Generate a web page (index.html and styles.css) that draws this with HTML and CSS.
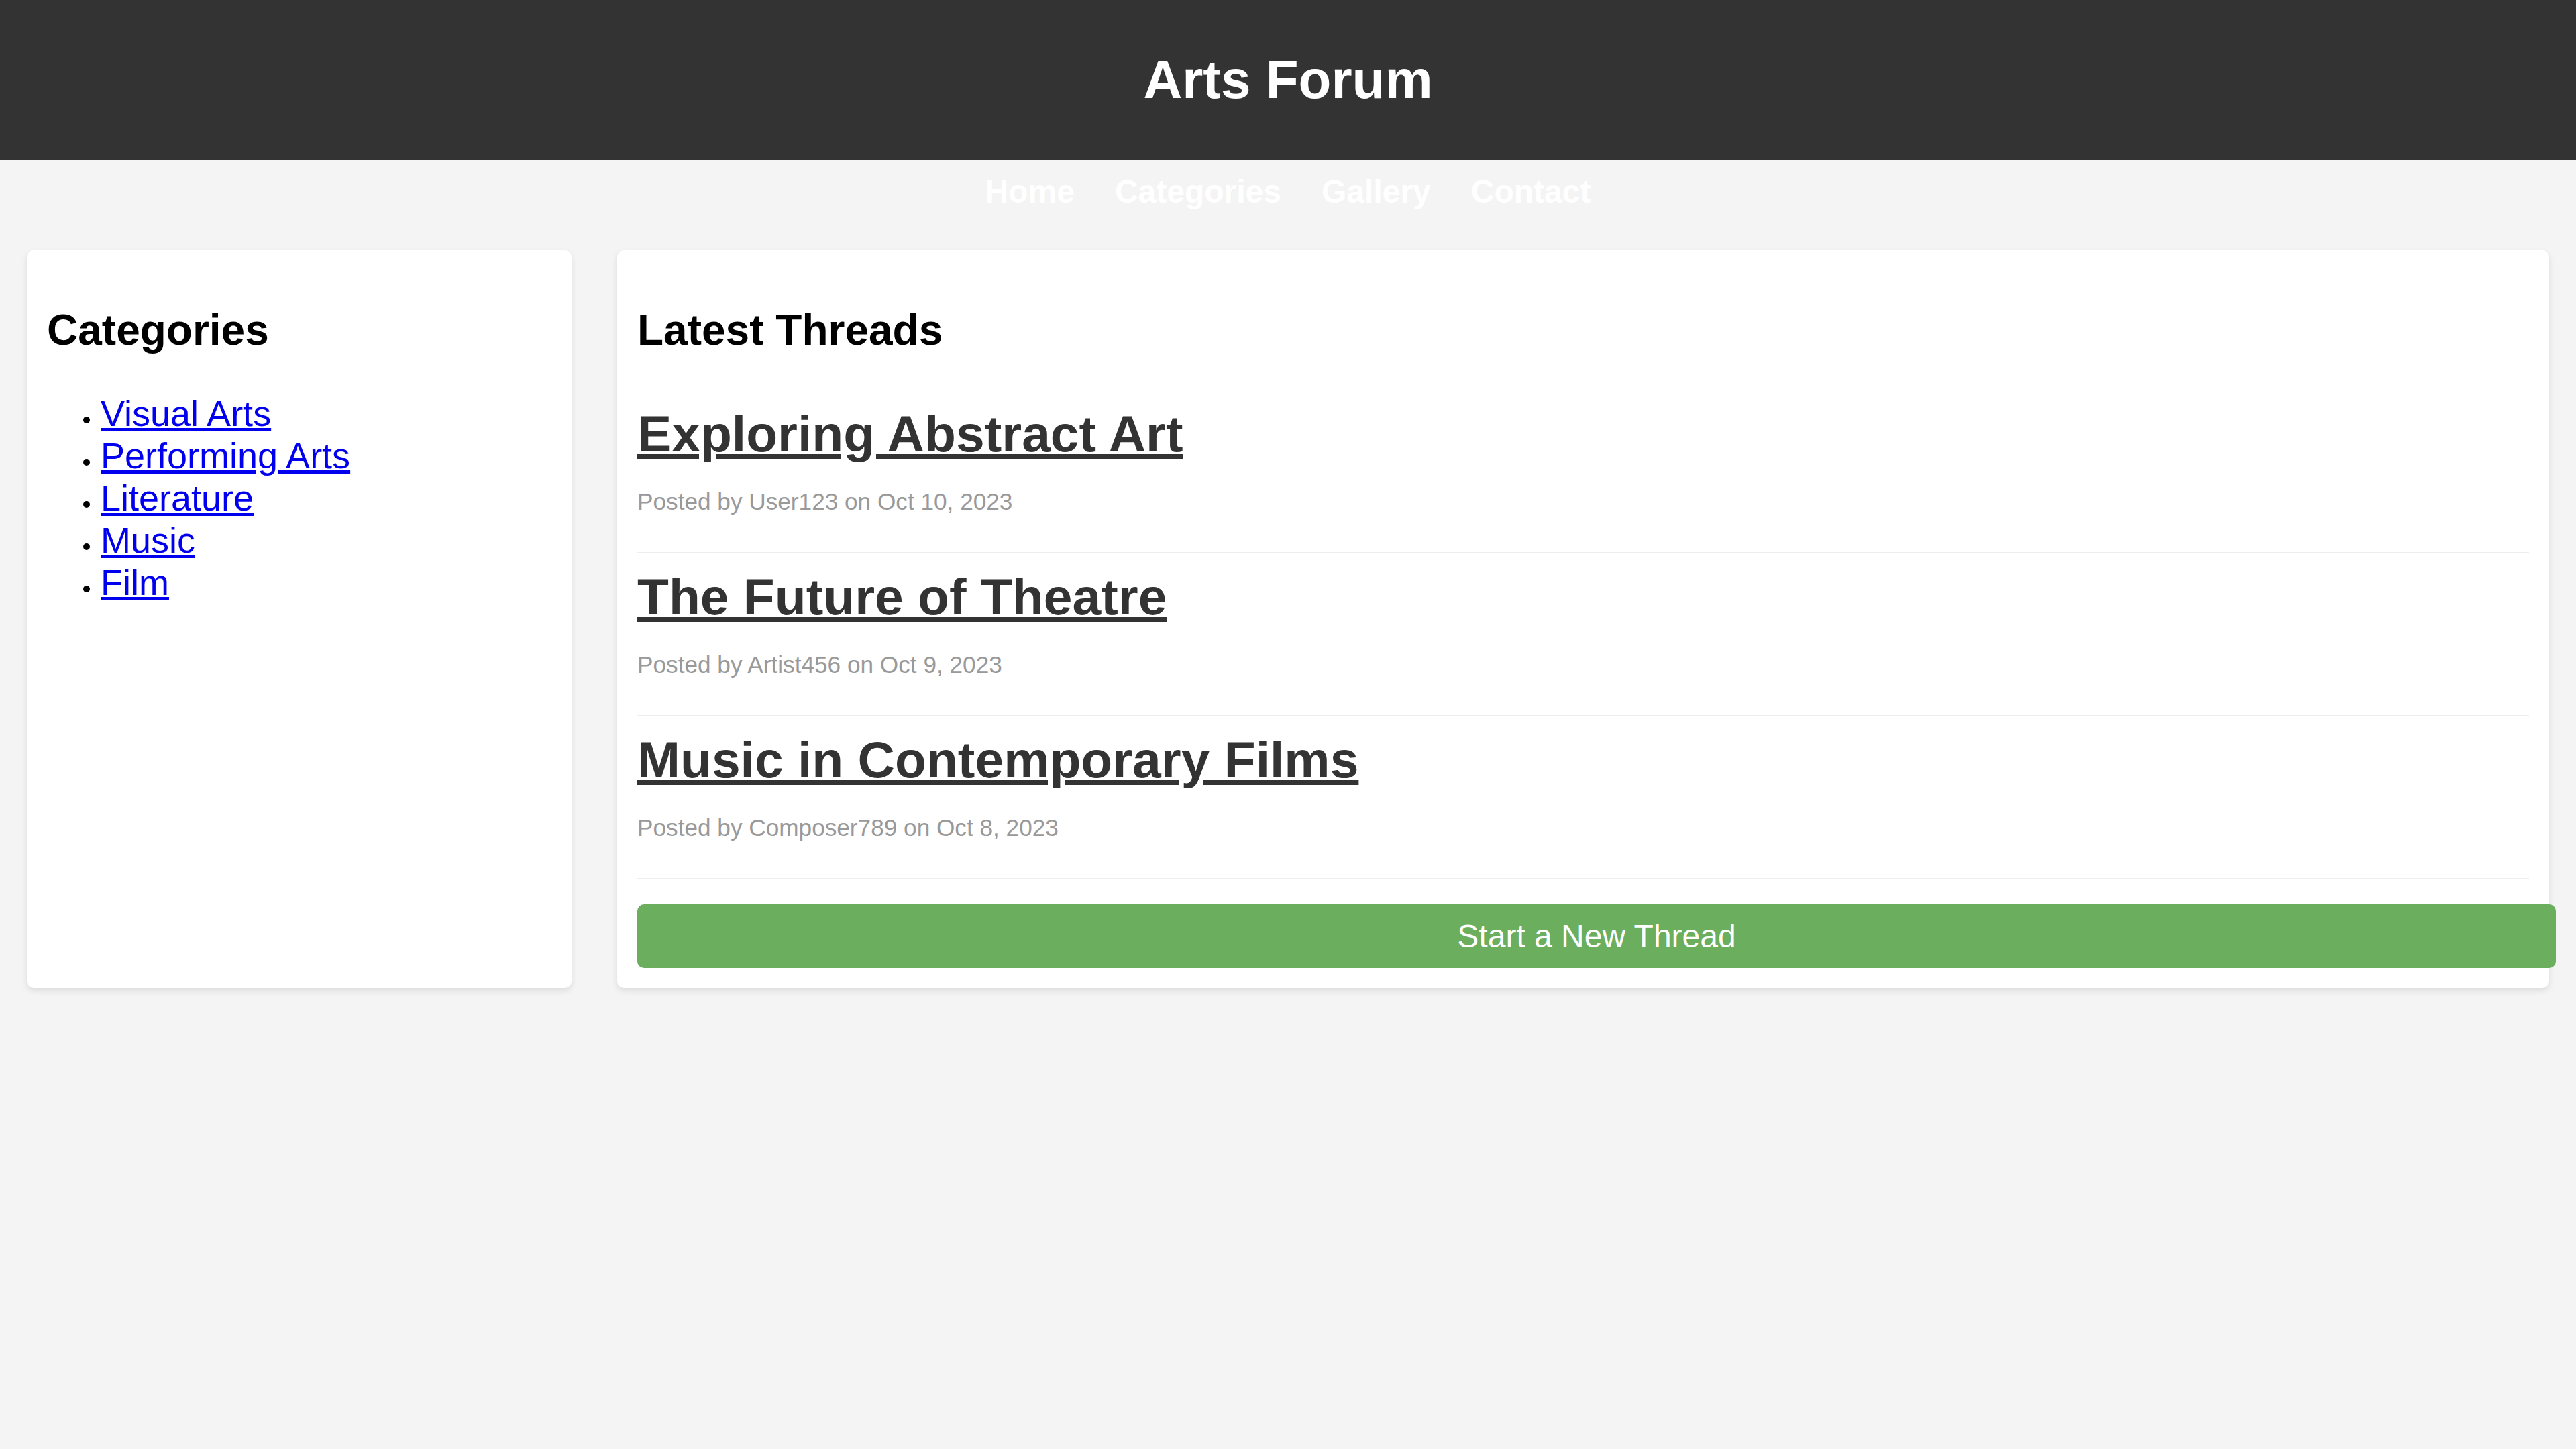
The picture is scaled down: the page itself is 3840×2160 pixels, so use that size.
FILE: index.html
```html
<!DOCTYPE html>
<html lang="en">
<head>
<meta charset="utf-8">
<title>Arts Forum</title>
<link rel="stylesheet" href="styles.css">
</head>
<body>
<header class="site-header">
  <h1 class="site-title">Arts Forum</h1>
</header>
<nav class="site-nav">
  <a href="#">Home</a>
  <a href="#">Categories</a>
  <a href="#">Gallery</a>
  <a href="#">Contact</a>
</nav>
<div class="layout">
  <aside class="card sidebar">
    <h2 class="card-title">Categories</h2>
    <ul class="cat-list">
      <li><a href="#">Visual Arts</a></li>
      <li><a href="#">Performing Arts</a></li>
      <li><a href="#">Literature</a></li>
      <li><a href="#">Music</a></li>
      <li><a href="#">Film</a></li>
    </ul>
  </aside>
  <main class="card main">
    <h2 class="card-title">Latest Threads</h2>
    <div class="thread">
      <h3 class="thread-title"><a href="#">Exploring Abstract Art</a></h3>
      <p class="thread-meta">Posted by User123 on Oct 10, 2023</p>
    </div>
    <div class="thread">
      <h3 class="thread-title"><a href="#">The Future of Theatre</a></h3>
      <p class="thread-meta">Posted by Artist456 on Oct 9, 2023</p>
    </div>
    <div class="thread">
      <h3 class="thread-title"><a href="#">Music in Contemporary Films</a></h3>
      <p class="thread-meta">Posted by Composer789 on Oct 8, 2023</p>
    </div>
    <button class="new-thread" type="button">Start a New Thread</button>
  </main>
</div>
</body>
</html>
```
FILE: styles.css
```css
html, body {
  margin: 0;
  padding: 0;
}
body {
  background: #f4f4f4;
  font-family: "Liberation Sans", Arial, sans-serif;
  font-size: 32px;
  color: #000;
}
.site-header {
  background: #333;
  color: #fff;
  padding: 20px 0;
  text-align: center;
}
.site-title {
  margin: 53px 0;
  font-size: 80px;
  font-weight: bold;
}
.site-nav {
  display: flex;
  justify-content: center;
  gap: 60px;
  padding: 20px 0;
}
.site-nav a {
  color: #fff;
  font-size: 48px;
  font-weight: bold;
  text-decoration: none;
}
.layout {
  display: flex;
  justify-content: space-between;
  align-items: stretch;
  padding: 40px;
}
.card {
  background: #fff;
  padding: 30px;
  border-radius: 10px;
  box-shadow: 0 4px 10px rgba(0, 0, 0, 0.1);
}
.sidebar {
  width: 20%;
}
.main {
  width: 75%;
}
.card-title {
  font-size: 64px;
  font-weight: bold;
  margin: 52px 0 53px;
}
.cat-list {
  margin: 56px 0;
  padding-left: 80px;
  font-size: 32px;
}
.cat-list a {
  font-size: 54px;
  line-height: 63px;
  color: #0000ee;
}
.thread {
  padding: 20px 0;
  border-bottom: 2px solid #eee;
}
.thread-title {
  margin: 0;
  font-size: 76.8px;
  font-weight: bold;
}
.thread-title a {
  color: #333;
}
.thread-meta {
  margin: 37px 0 35px;
  font-size: 35.2px;
  color: #999;
}
.new-thread {
  display: block;
  width: 100%;
  box-sizing: content-box;
  margin-top: 37px;
  padding: 20px;
  border: none;
  border-radius: 10px;
  background: #6aae5e;
  color: #fff;
  font-family: "Liberation Sans", Arial, sans-serif;
  font-size: 48px;
  cursor: pointer;
}
```
